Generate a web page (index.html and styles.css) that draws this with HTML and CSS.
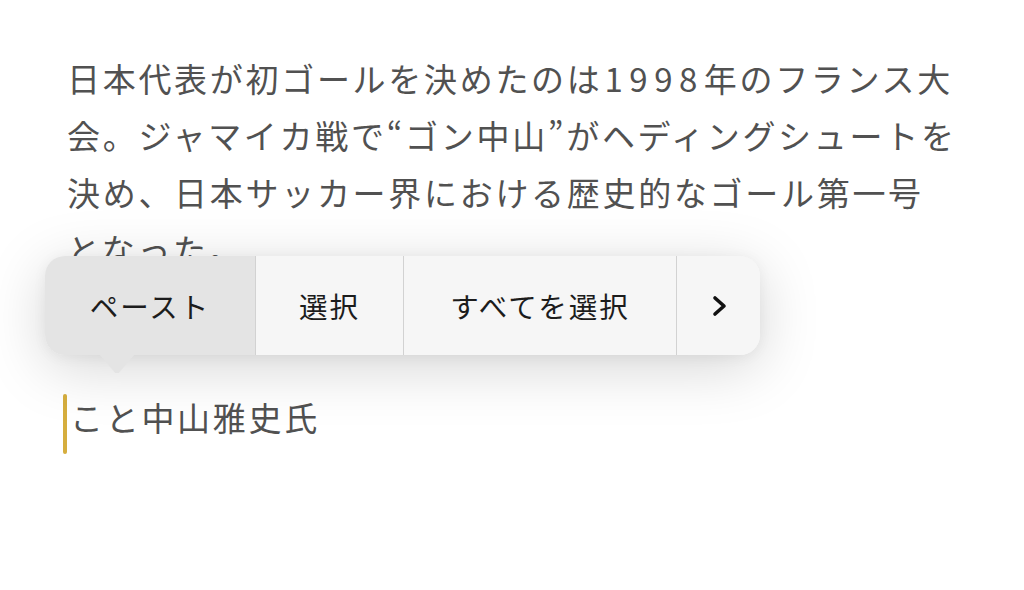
FILE: index.html
```html
<!DOCTYPE html>
<html lang="ja">
<head>
<meta charset="utf-8">
<link rel="stylesheet" href="styles.css">
</head>
<body>
<main class="page">
  <p class="para">日本代表が初ゴールを決めたのは<span class="num">1998</span>年のフランス大<br>会。ジャマイカ戦で“ゴン中山”がヘディングシュートを<br>決め、日本サッカー界における歴史的なゴール第一号<br>となった。</p>
  <p class="para edit"><span class="caret"></span>こと中山雅史氏</p>

  <div class="menu">
    <div class="seg seg-active">ペースト</div>
    <div class="seg">選択</div>
    <div class="seg">すべてを選択</div>
    <div class="seg seg-more">
      <svg width="16" height="22" viewBox="0 0 16 22"><path d="M3 3 L12 11 L3 19" fill="none" stroke="#111" stroke-width="3.6" stroke-linecap="round" stroke-linejoin="round"/></svg>
    </div>
    <div class="tail"></div>
  </div>
</main>
</body>
</html>
```
FILE: styles.css
```css
html, body {
  margin: 0;
  padding: 0;
  background: #ffffff;
}
body {
  width: 1024px;
  height: 590px;
  overflow: hidden;
  font-family: "Noto Sans CJK JP", "Noto Sans", sans-serif;
}
.page {
  position: relative;
  padding: 50px 0 0 67px;
}
.para {
  margin: 0;
  font-size: 33px;
  line-height: 57px;
  letter-spacing: 2.7px;
  color: #515151;
  white-space: nowrap;
}
.num {
  letter-spacing: 6.5px;
  margin-left: 2px;
}
.edit {
  margin-top: 111px;
}
.caret {
  display: inline-block;
  width: 4px;
  height: 60px;
  border-radius: 2px;
  background: #d6ae3e;
  vertical-align: middle;
  margin: -6px 3px 0 -4px;
  transform: translateY(5px);
}
.menu {
  position: absolute;
  left: 45px;
  top: 256px;
  height: 99px;
  display: flex;
  border-radius: 20px;
  background: #f6f6f6;
  box-shadow: 0 12px 60px rgba(0,0,0,0.17), 0 2px 14px rgba(0,0,0,0.05);
}
.seg {
  display: flex;
  align-items: center;
  justify-content: center;
  box-sizing: border-box;
  padding: 0;
  font-size: 28.5px;
  letter-spacing: 2px;
  color: #1c1c1c;
  border-left: 1px solid #d2d2d2;
  background: #f6f6f6;
}
.seg-active {
  border-left: none;
  border-radius: 20px 0 0 20px;
  width: 210px;
  background: #e4e4e4;
}
.seg:nth-child(2) { width: 148px; }
.seg:nth-child(3) { width: 273px; }
.seg-more {
  width: 84px;
  border-radius: 0 20px 20px 0;
}
.seg-more svg { margin-left: 2px; }
.tail {
  position: absolute;
  left: 54px;
  top: 98px;
  width: 36px;
  height: 20px;
  background: #e4e4e4;
  clip-path: polygon(0 0, 100% 0, 55% 95%, 45% 95%);
}
```
